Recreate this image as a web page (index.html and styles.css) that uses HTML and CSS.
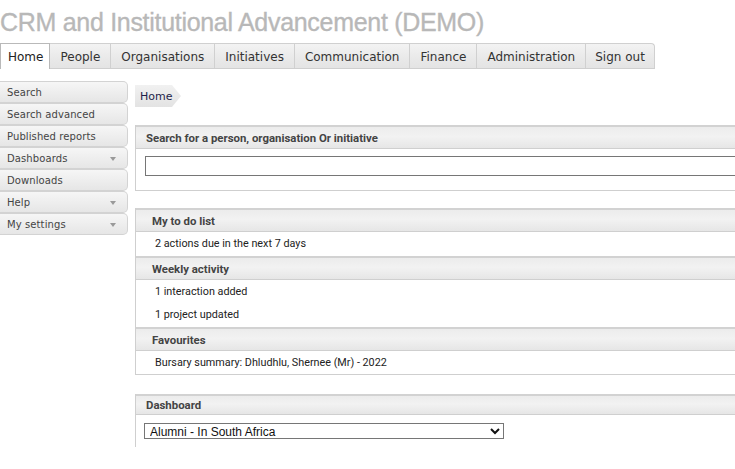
FILE: index.html
```html
<!DOCTYPE html>
<html>
<head>
<meta charset="utf-8">
<title>CRM and Institutional Advancement (DEMO)</title>
<link rel="stylesheet" href="styles.css">
</head>
<body>
<div class="page">
  <h1 class="title">CRM and Institutional Advancement (DEMO)</h1>
  <nav class="tabs">
    <a class="tab active">Home</a>
    <a class="tab">People</a>
    <a class="tab">Organisations</a>
    <a class="tab">Initiatives</a>
    <a class="tab">Communication</a>
    <a class="tab">Finance</a>
    <a class="tab">Administration</a>
    <a class="tab last">Sign out</a>
  </nav>
  <div class="content">
    <ul class="sidebar">
      <li class="side-item">Search</li>
      <li class="side-item">Search advanced</li>
      <li class="side-item">Published reports</li>
      <li class="side-item has-menu">Dashboards<span class="caret"></span></li>
      <li class="side-item">Downloads</li>
      <li class="side-item has-menu">Help<span class="caret"></span></li>
      <li class="side-item has-menu">My settings<span class="caret"></span></li>
    </ul>
    <main class="main">
      <div class="crumb-row"><span class="crumb">Home</span></div>

      <section class="panel">
        <div class="panel-head head-search">Search for a person, organisation Or initiative</div>
        <div class="search-body"><input class="search-input" type="text"></div>
      </section>

      <section class="panel">
        <div class="panel-head">My to do list</div>
        <div class="row">2 actions due in the next 7 days</div>
        <div class="panel-head">Weekly activity</div>
        <div class="row">1 interaction added</div>
        <div class="row">1 project updated</div>
        <div class="panel-head">Favourites</div>
        <div class="row">Bursary summary: Dhludhlu, Shernee (Mr) - 2022</div>
      </section>

      <section class="dash">
        <div class="panel-head head-dash">Dashboard</div>
        <div class="dash-body">
          <select class="dash-select">
            <option>Alumni - In South Africa</option>
          </select>
        </div>
      </section>
    </main>
  </div>
</div>
</body>
</html>
```
FILE: styles.css
```css
html, body {
  margin: 0;
  padding: 0;
  background: #fff;
  overflow: hidden;
}

.page {
  width: 800px;
}

.title {
  margin: 0 0 3px 0;
  padding-top: 4px;
  height: 36px;
  line-height: 36px;
  font-family: "Liberation Sans", Arial, sans-serif;
  font-size: 25px;
  letter-spacing: -0.3px;
  font-weight: normal;
  color: #b8b8b8;
  -webkit-text-stroke: 0.35px #b8b8b8;
  white-space: nowrap;
}

.tabs {
  display: flex;
  width: max-content;
  border-bottom: 1px solid #cfcfcf;
}

.tab {
  display: block;
  flex: none;
  white-space: nowrap;
  height: 24px;
  line-height: 26px;
  padding: 0 10px;
  font-family: "DejaVu Sans", Verdana, sans-serif;
  font-size: 12px;
  color: #333;
  background: linear-gradient(#f3f3f3, #e9e9e9 60%, #e4e4e4);
  border-top: 1px solid #d0d0d0;
  border-right: 1px solid #d0d0d0;
}

.tab.active {
  background: #fff;
  border: 1px solid #b9b9b9;
  border-bottom: none;
  height: 25px;
  margin-bottom: -1px;
  padding: 0 6px 0 7px;
  color: #222;
}

.tab.last {
  border-top-right-radius: 4px;
  padding: 0 9px;
}

.content {
  display: flex;
  align-items: flex-start;
  padding-top: 12px;
}

.sidebar {
  list-style: none;
  margin: 0;
  padding: 0;
  width: 128px;
  flex: none;
}

.side-item {
  position: relative;
  height: 20px;
  line-height: 21px;
  padding-left: 7px;
  font-family: "DejaVu Sans", Verdana, sans-serif;
  font-size: 10px;
  letter-spacing: 0.1px;
  color: #444;
  background: linear-gradient(#f6f6f6, #eeeeee 50%, #e6e6e6);
  border: 1px solid #d3d3d3;
  border-left: none;
  border-radius: 0 5px 5px 0;
}

.caret {
  position: absolute;
  right: 11px;
  top: 9px;
  width: 0;
  height: 0;
  border-left: 3px solid transparent;
  border-right: 3px solid transparent;
  border-top: 4px solid #9a9a9a;
}

.main {
  margin-left: 7px;
  width: 650px;
  flex: none;
  padding-top: 4px;
}

.crumb-row {
  display: flex;
  margin-bottom: 18px;
}

.crumb {
  display: block;
  height: 22px;
  line-height: 23px;
  width: 41px;
  padding-left: 5px;
  font-family: "DejaVu Sans", Verdana, sans-serif;
  font-size: 11px;
  color: #1f1f4a;
  background: linear-gradient(#f1f1f1, #e3e3e3);
  clip-path: polygon(0 0, 37px 0, 46px 50%, 37px 100%, 0 100%);
}

.panel {
  border: 1px solid #cfcfcf;
  border-top: none;
  margin-bottom: 17px;
}

.panel-head {
  height: 21px;
  line-height: 22px;
  padding-left: 16px;
  font-family: "Roboto", "Noto Sans", sans-serif;
  font-weight: bold;
  font-size: 11.4px;
  color: #444;
  background: linear-gradient(#ececec, #f2f2f2 45%, #e6e6e6);
  border-top: 2px solid #d2d2d2;
  border-bottom: 1px solid #cfcfcf;
}

.head-search {
  padding-left: 10px;
}

.search-body {
  padding: 7px 9px 14px 9px;
}

.search-input {
  display: block;
  box-sizing: border-box;
  width: 620px;
  height: 20px;
  margin: 0;
  border: 1px solid #767676;
  border-radius: 0;
  background: #fff;
}

.row {
  height: 23.5px;
  line-height: 23.5px;
  padding-left: 19px;
  font-family: "Roboto", "Noto Sans", sans-serif;
  font-size: 10.8px;
  color: #222;
  background: #fff;
}

.dash {
  margin-top: 19px;
  border-left: 1px solid #cfcfcf;
}

.head-dash {
  height: 18px;
  line-height: 19px;
  padding-left: 10px;
}

.dash-body {
  padding: 8px 8px;
}

.dash-select {
  display: block;
  box-sizing: border-box;
  width: 360px;
  height: 16px;
  margin: 0;
  padding: 0 0 0 1px;
  font-family: "Liberation Sans", Arial, sans-serif;
  font-size: 12px;
  color: #111;
  border: 1px solid #767676;
  border-radius: 0;
  background: #fff;
}
```
